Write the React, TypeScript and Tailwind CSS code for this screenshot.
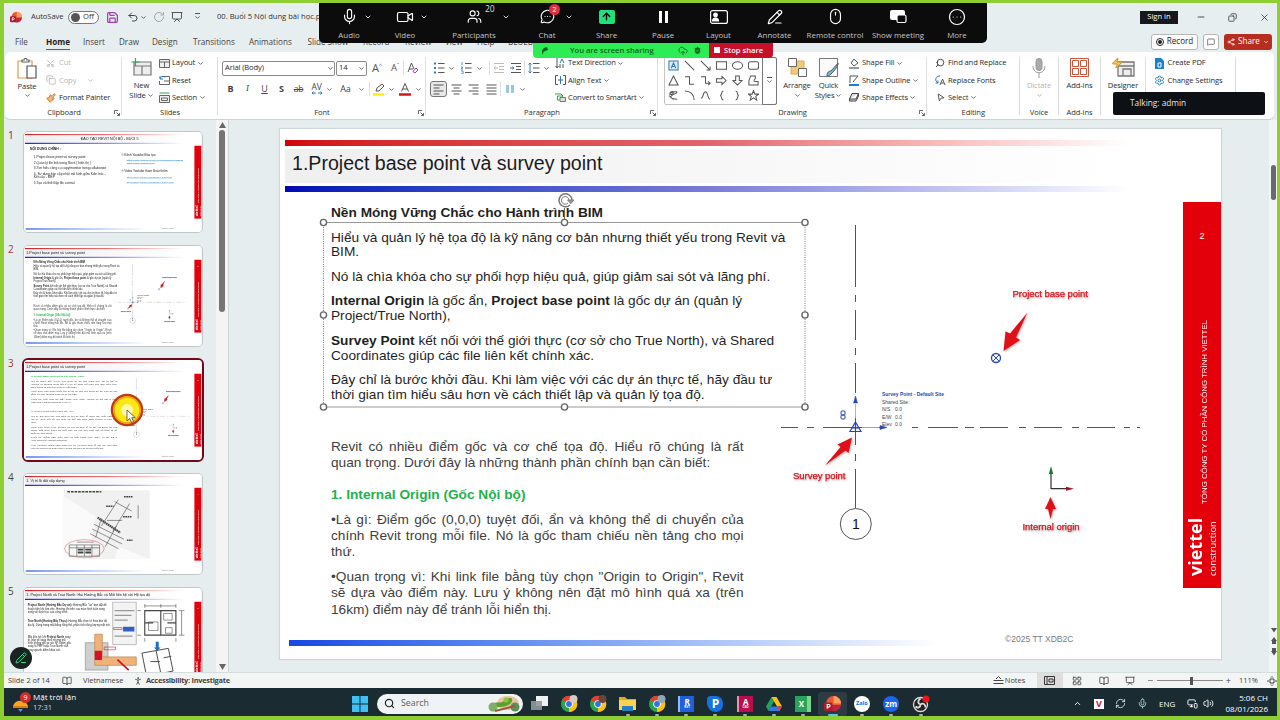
import type { ReactNode } from 'react';
import { Mic, Video, Users, MessageCircleMore, ArrowUp, PencilLine, Mouse, CircleEllipsis, ChevronDown, ChevronUp, Search, Undo2, RotateCw, Presentation, Save, Scissors, Copy, Paintbrush, MessageSquare, Share2, X, Minus, Copy as Restore, CloudUpload, ShieldCheck, BookOpen, RefreshCw, Volume2, MonitorSmartphone, Settings, LayoutGrid, MousePointer2, PersonStanding, Zap } from 'lucide-react';

const ui = "font-['Open_Sans','Noto_Sans',sans-serif]";

function Chev({ className = '' }: { className?: string }) {
  return <ChevronDown className={`shrink-0 size-[7px] text-[#444] ${className}`} strokeWidth={2.6} />;
}

function Group({ label, className, children, launcher }: { label: string; className: string; children: ReactNode; launcher?: boolean }) {
  return (
    <div className={`relative shrink-0 flex flex-col ${className}`}>
      <div className="h-[52px] flex items-start">{children}</div>
      <div className="h-[12px] flex items-center justify-center leading-none text-[#333]">{label}</div>
      {launcher && (
        <svg className="absolute right-[2px] bottom-[3px]" width="6" height="6" viewBox="0 0 6 6" fill="none" stroke="#444" strokeWidth=".8">
          <path d="M.5 4V.5H4M2.5 2.5l3 3M5.5 3v2.5H3" />
        </svg>
      )}
      <div className="absolute right-0 top-[2px] h-[58px] w-px bg-[#dcdcdc]" />
    </div>
  );
}

function Row({ icon, text, chev, dim }: { icon: ReactNode; text: string; chev?: boolean; dim?: boolean }) {
  return (
    <div className={`h-[17.3px] flex items-center leading-none ${dim ? 'text-[#b5b5b5]' : 'text-[#2a2a2a]'}`}>
      <span className="w-[13px] flex">{icon}</span>
      {text}
      {chev && <Chev className="ml-[1.5px]" />}
    </div>
  );
}

function Cell({ w, children, className = '' }: { w: string; children?: ReactNode; className?: string }) {
  return <span className={`shrink-0 flex items-center justify-center h-[16px] ${w} ${className}`}>{children}</span>;
}

function Lines4({ d }: { d: string }) {
  return (
    <svg width="11" height="11" viewBox="0 0 11 11" fill="none" stroke="#555" strokeWidth="1">
      <path d={d} />
    </svg>
  );
}

function ListIcon({ variant }: { variant: 'bullet' | 'number' | 'dec' | 'inc' | 'space' }) {
  return (
    <svg width="12" height="12" viewBox="0 0 12 12" fill="none" strokeWidth="1">
      {variant === 'bullet' && <path d="M1 1.5h2M1 6h2M1 10.5h2" stroke="#2b7cb8" strokeWidth="2" />}
      {variant === 'number' && <path d="M2 0v3M1 5h1.5v1L1 7h2M1 9h2v3H1" stroke="#2b7cb8" strokeWidth=".8" />}
      {variant === 'space' && <path d="M2 1v10M.5 2.5L2 1l1.500 1.500M.5 9.500L2 11l1.500-1.500" stroke="#2b7cb8" />}
      {(variant === 'dec' || variant === 'inc') ? (
        <>
          <path d="M1 1.500h10M6 4.500h5M6 7.500h5M1 10.500h10" stroke={variant === 'dec' ? '#bbb' : '#555'} />
          <path d={variant === 'dec' ? 'M5 6H1M2.500 4.500L1 6l1.500 1.500' : 'M0 6h4M2.500 4.500L4 6 2.500 7.500'} stroke={variant === 'dec' ? '#bbb' : '#2b7cb8'} />
        </>
      ) : (
        <path d="M5 1.500h6.500M5 6h6.500M5 10.500h6.500" stroke="#555" />
      )}
    </svg>
  );
}

const shapes = [
  'M1 1h10v10H1zM3.500 9L6 3l2.500 6M4.500 7h3', 'M1 1l10 10', 'M1 1l10 10M7 11h4V7', 'M.5 2h11v8H.5z', 'M.5 6a5.500 4 0 1 0 11 0a5.500 4 0 1 0-11 0', 'M2.500 2h7a2 2 0 0 1 2 2v4a2 2 0 0 1-2 2h-7a2 2 0 0 1-2-2V4a2 2 0 0 1 2-2z',
  'M6 1l5 10H1z', 'M1 2h5v8h5', 'M1 2h5v7h5M9 7l2 2-2 2', 'M.5 4h6V1.500L11 6l-4.500 4.500V8h-6z', 'M4 1h4v5h3l-5 5-5-5h3z', 'M3 1h5v3c-2 1-2 3 0 3h3v4H1V6z',
  'M2 3c5-4 5 2 1 2s3-4 6-3-5 3-6 5 4 3 7 3M1 7c1-2 3 3 5 3', 'M1 1c6 0 10 4 10 10', 'M1 9c3 0 2-7 5-7s2 8 5 8', 'M8 1c-3 0-1 5-3.500 5C7 6 5 11 8 11', 'M4 1c3 0 1 5 3.500 5C5 6 7 11 4 11', 'M6 .5l1.500 4H11.500L8.500 7l1 4L6 8.500 2.500 11l1-4L.5 4.500h4z',
];

function ZoomItem({ w, icon, label, chev, count }: { w: string; icon: ReactNode; label: string; chev?: string; count?: string }) {
  return (
    <div className={`relative shrink-0 flex flex-col items-center ${w}`}>
      <div className="h-[30px] pt-[3px] flex items-center text-white">{icon}</div>
      <span className="text-[7.900px] leading-[10px] text-[#c4c4c4]">{label}</span>
      {chev && <ChevronDown className={`absolute top-[13px] size-[8px] text-white ${chev}`} strokeWidth={2.500} />}
      {count && <span className="absolute left-[54px] top-[5px] text-[8.5px] leading-none text-[#ddd]">{count}</span>}
    </div>
  );
}

function TitleBar() {
  return (
    <div className="h-[28px] shrink-0 flex items-center text-[7.6px] leading-none text-[#333] whitespace-nowrap">
      <div className="flex items-center w-[316px] pl-[6px] overflow-hidden *:shrink-0">
        <PptLogo size={12} />
        <span className="ml-[9px] w-[37px] tracking-[-0.1px]">AutoSave</span>
        <span className="w-[31px] h-[13px] rounded-full border border-[#777] bg-white flex items-center gap-[3px] pl-[2px]">
          <i className="size-[9px] rounded-full bg-[#555]" />Off
        </span>
        <Save className="ml-[7px] size-[13px] text-[#a33fb5]" strokeWidth={2.300} />
        <Undo2 className="ml-[8px] size-[12px] text-[#444]" />
        <Chev className="ml-[1px]" />
        <RotateCw className="ml-[6px] size-[12px] text-[#a5a5a5]" />
        <Presentation className="ml-[6px] size-[12px] text-[#555]" />
        <span className="ml-[11px] flex flex-col items-center"><i className="w-[5px] h-px bg-[#555]" /><Chev /></span>
        <span className="ml-[16px]">00. Buổi 5 Nội dung bài học.pptx</span>
      </div>
      <div className="flex-1" />
      <span className="w-[38px] h-[13px] bg-[#16181c] text-white flex items-center justify-center">Sign in</span>
      <Minus className="ml-[18px] size-[10px]" />
      <Restore className="ml-[22px] size-[9px] -scale-x-100" />
      <X className="ml-[22px] mr-[7px] size-[11px]" strokeWidth={1.700} />
    </div>
  );
}

function PptLogo({ size }: { size: number }) {
  return (
    <svg width={size} height={size} viewBox="0 0 16 16">
      <circle cx="9" cy="8" r="7" fill="#e8593a" />
      <path d="M9 1a7 7 0 0 1 7 7H9z" fill="#f9a05c" />
      <path d="M2 9.500h14A7 7 0 0 1 4 13z" fill="#b9253c" />
      <rect x="0" y="7" width="8" height="8" rx="1.500" fill="#a81e2d" />
      <path d="M3 13V9h1.500a1.200 1.200 0 0 1 0 2.400H3" fill="none" stroke="#fff" />
    </svg>
  );
}

const tabs = [
  ['File', 'w-[31px]'], ['Home', 'w-[37px]'], ['Insert', 'w-[36px]'], ['Draw', 'w-[33px]'], ['Design', 'w-[41px]'], ['Transitions', 'w-[56px]'],
  ['Animations', 'w-[58.5px]'], ['Slide Show', 'w-[55.5px]'], ['Record', 'w-[42px]'], ['Review', 'w-[40px]'], ['View', 'w-[32px]'], ['Help', 'w-[31px]'], ['BLUEBEAM', 'w-[50px]'],
];

function TabRow() {
  return (
    <div className="h-[21px] shrink-0 flex items-center text-[8.1px] leading-none text-[#444] pl-[11px] pr-[5px] whitespace-nowrap">
      {tabs.map(([name, w]) => (
        <span key={name} className={`shrink-0 h-[17px] flex items-center ${w}`}>
          <span className={`h-full pt-[5px] border-b-[1.5px] ${name === 'Home' ? 'font-bold text-[#222] border-[#b7392a]' : 'border-transparent'}`}>{name}</span>
        </span>
      ))}
      <div className="flex-1" />
      <span className="h-[16px] w-[47px] rounded-[3px] border border-[#b5b5b5] bg-white flex items-center justify-center gap-[3px] text-[#222]">
        <i className="size-[8px] rounded-full border border-[#222] flex items-center justify-center"><i className="size-[4px] rounded-full bg-[#222]" /></i>Record
      </span>
      <span className="ml-[5px] h-[16px] w-[16px] rounded-[3px] border border-[#b5b5b5] bg-white flex items-center justify-center"><MessageSquare className="size-[8px]" /></span>
      <span className="ml-[5px] h-[16px] w-[48px] rounded-[3px] bg-[#b72d1f] text-white flex items-center justify-center gap-[3px]">
        <Share2 className="size-[8px]" />Share<ChevronDown className="size-[6px]" strokeWidth={3} />
      </span>
    </div>
  );
}

function Ribbon() {
  return (
    <div className="h-[67px] shrink-0 ml-[1px] mr-[3px] rounded-[5px] bg-white shadow-[0_1px_1px_#c9d0d2] pt-[2.5px] pl-[1px] flex text-[7.6px] tracking-[-0.12px] text-[#2a2a2a] whitespace-nowrap overflow-hidden">
      <Group label="Clipboard" className="w-[116px]" launcher>
        <div className="w-[40px] pl-[2px] pt-[3px] flex flex-col items-center leading-none">
          <svg width="20" height="21" viewBox="0 0 20 21" fill="#fff" strokeWidth="1.200">
            <path d="M1 3h14v17H1z" stroke="#e39a45" />
            <path d="M5 4V2h2a1.500 1.500 0 0 1 3 0h2v2z" stroke="#666" />
            <path d="M10 8h9v12h-9z" stroke="#555" />
          </svg>
          <span className="mt-[4px]">Paste</span>
          <Chev className="mt-[2px]" />
        </div>
        <div>
          <Row dim icon={<Scissors className="size-[9px] -rotate-90" />} text="Cut" />
          <div className="flex items-center"><Row dim icon={<Copy className="size-[10px]" />} text="Copy" /><Chev className="ml-[11px] opacity-40" /></div>
          <Row icon={<Paintbrush className="size-[10px] text-[#d5731e] fill-[#f0b878]" />} text="Format Painter" />
        </div>
      </Group>
      <Group label="Slides" className="w-[96px]">
        <div className="w-[37px] pl-[2px] pt-[3px] flex flex-col items-center leading-none">
          <svg width="21" height="18" viewBox="0 0 21 18" fill="none" stroke="#777" strokeWidth="1.200">
            <path d="M3 4h17v13H3zM3 8h17M11 8v9" fill="#eee" />
            <path d="M4.500 0v8M.5 4h8" stroke="#3aa655" />
          </svg>
          <span className="mt-[6px]">New</span>
          <span className="mt-[3px] flex items-center">Slide<Chev className="ml-[1px]" /></span>
        </div>
        <div>
          <Row chev icon={<svg width="11" height="9" viewBox="0 0 11 9" fill="#eee" stroke="#666"><path d="M.5.5h10v8H.5zM.5 3h10M5.500 3v5.500" /></svg>} text="Layout" />
          <Row icon={<svg width="11" height="10" viewBox="0 0 11 10" fill="none" stroke="#666"><path d="M3 1.500h7.500v8H.5V6M5 6h5" /><path d="M1 1v3h3M1 4c1-3 3-3 5-2" stroke="#2b7cb8" /></svg>} text="Reset" />
          <Row chev icon={<svg width="11" height="11" viewBox="0 0 11 11" fill="#eee" stroke="#666"><path d="M.5 1h10" stroke="#3aa655" /><path d="M.5 3.500h10v7H.5zM2.500 6h6v2.500h-6z" /></svg>} text="Section" />
        </div>
      </Group>
      <Group label="Font" className="w-[208px]" launcher>
        <div className="pl-[4px]">
          <div className="h-[16px] mt-[5.500px] flex items-center">
            <span className="w-[113px] h-[15px] border border-[#8a8a8a] rounded-[2px] flex items-center justify-between px-[2px]">Arial (Body)<Chev className="-mr-[2px]" /></span>
            <span className="ml-px w-[31px] h-[15px] border border-[#8a8a8a] rounded-[2px] flex items-center justify-between px-[2px]">14<Chev className="-mr-[1px]" /></span>
            <Cell w="w-[20px]" className="text-[11px] text-[#555]">A<sup className="text-[6px] text-[#2b7cb8]">^</sup></Cell>
            <Cell w="w-[16px]" className="text-[9.5px] text-[#555]">A<sup className="text-[6px] text-[#2b7cb8]">ˇ</sup></Cell>
            <i className="h-[14px] w-px bg-[#ddd]" />
            <Cell w="w-[18px]"><svg width="12" height="12" viewBox="0 0 12 12" fill="none" stroke="#555"><path d="M1 10L4.500 1 7 7M2 7h4" /><path d="M6 9.500L9 6l2 2-3 3z" stroke="#a33fb5" /></svg></Cell>
          </div>
          <div className="h-[16px] mt-[5px] flex items-center text-[9px] text-[#444]">
            <Cell w="w-[17px]" className="font-bold">B</Cell>
            <Cell w="w-[17px]" className="italic font-serif">I</Cell>
            <Cell w="w-[17px]" className="underline">U</Cell>
            <Cell w="w-[17px]" className="font-bold">S</Cell>
            <Cell w="w-[17px]" className="line-through text-[8.500px]">ab</Cell>
            <Cell w="w-[19px]" className="text-[8.5px] leading-[8px] flex-col">AV<svg width="12" height="4" viewBox="0 0 12 4" fill="none" stroke="#2b7cb8"><path d="M1 2h4M7 2h4M2.500 .5L1 2l1.500 1.500M9.500.5L11 2 9.500 3.500" /></svg></Cell>
            <Cell w="w-[7px]"><Chev /></Cell>
            <Cell w="w-[25px]">Aa</Cell>
            <Chev />
            <i className="ml-[4px] h-[14px] w-px bg-[#ddd]" />
            <Cell w="w-[18px]"><svg width="12" height="13" viewBox="0 0 12 13" fill="none"><path d="M3 8l1-3 5-4 2 2-5 5z" stroke="#555" /><path d="M0 11.500h11" stroke="#fdf100" strokeWidth="2.500" /></svg></Cell>
            <Chev />
            <Cell w="w-[20px]"><svg width="12" height="13" viewBox="0 0 12 13" fill="none"><path d="M2.500 8.500L6 .5l3.500 8M4 6h4" stroke="#555" /><path d="M0 11.500h12" stroke="#d01818" strokeWidth="2.500" /></svg></Cell>
            <Chev />
          </div>
        </div>
      </Group>
      <Group label="Paragraph" className="w-[232px]" launcher>
        <div className="w-[129px] pl-[4px]">
          <div className="h-[16px] mt-[5.5px] flex items-center">
            <Cell w="w-[17px]"><ListIcon variant="bullet" /></Cell><Chev className="ml-px" />
            <Cell w="w-[21px]"><ListIcon variant="number" /></Cell><Chev />
            <i className="ml-[6px] h-[14px] w-px bg-[#ddd]" />
            <Cell w="w-[17px]"><ListIcon variant="dec" /></Cell>
            <Cell w="w-[17px]"><ListIcon variant="inc" /></Cell>
            <i className="h-[14px] w-px bg-[#ddd]" />
            <Cell w="w-[18px]"><ListIcon variant="space" /></Cell><Chev />
          </div>
          <div className="h-[16px] mt-[5px] flex items-center">
            <Cell w="w-[17px]" className="border border-[#777] bg-[#e8e8e8] rounded-[3px]"><Lines4 d="M.5 1h10M.5 4h6M.5 7h10M.5 10h6" /></Cell>
            <Cell w="w-[18px]"><Lines4 d="M.5 1h10M2.5 4h6M.5 7h10M2.5 10h6" /></Cell>
            <Cell w="w-[17px]"><Lines4 d="M.5 1h10M4.5 4h6M.5 7h10M4.5 10h6" /></Cell>
            <Cell w="w-[18px]"><Lines4 d="M.5 1h10M.5 4h10M.5 7h10M.5 10h10" /></Cell>
            <i className="h-[14px] w-px bg-[#ddd]" />
            <Cell w="w-[18px]"><svg width="10" height="8" viewBox="0 0 10 8" fill="#9cc7df"><path d="M1 0h3v8H1zM6 0h3v8H6z" /></svg></Cell>
            <Chev />
          </div>
        </div>
        <div>
          <Row chev icon={<svg width="10" height="11" viewBox="0 0 10 11" fill="none" stroke="#555"><path d="M2 0v10M.5 8L2 10l1.500-2M5 6v4M8 6v4" /><path d="M5 5l2-4 2 4" stroke="#2b7cb8" /></svg>} text="Text Direction" />
          <Row chev icon={<svg width="11" height="10" viewBox="0 0 11 10" fill="none" stroke="#555"><path d="M3 .5H.5v9H3M8 .5h2.500v9H8M3 5h5" /><path d="M5.500 1v8" stroke="#2b7cb8" /></svg>} text="Align Text" />
          <Row chev icon={<svg width="11" height="9" viewBox="0 0 11 9" fill="none" stroke="#777"><path d="M0 1h6l2 2" stroke="#3aa655" /><path d="M2.500 3h5v4h-5z" stroke="#3aa655" /><path d="M5 4.500h5.500v4H5z" fill="#ddd" /></svg>} text="Convert to SmartArt" />
        </div>
      </Group>
      <Group label="Drawing" className="w-[269px]" launcher>
        <div className="ml-[6px] mt-[2px] w-[113px] h-[48px] border border-[#c4c4c4] rounded-[2px] flex">
          <div className="w-[97px] grid grid-cols-6 grid-rows-3 place-items-center">
            {shapes.map((d, i) => (
              <svg key={i} width="11" height="11" viewBox="0 0 12 12" fill={i === 0 ? '#dcebf5' : 'none'} stroke={i === 0 ? '#2b7cb8' : '#555'} strokeWidth="1.100"><path d={d} /></svg>
            ))}
          </div>
          <div className="flex-1 -my-px -mr-px border border-[#777] rounded-r-[2px] flex flex-col items-center justify-center"><i className="w-[5px] h-px bg-[#555]" /><Chev /></div>
        </div>
        <div className="w-[38px] pl-[2px] pt-[3px] flex flex-col items-center leading-none">
          <svg width="19" height="19" viewBox="0 0 19 19" strokeWidth="1"><path d="M3 3h13v13H3z" fill="#f2c879" stroke="#e0a84c" /><path d="M.5.5h8v8h-8zM10.500 10.500h8v8h-8z" fill="#fff" stroke="#666" /></svg>
          <span className="mt-[5px]">Arrange</span>
          <Chev className="mt-[3px]" />
        </div>
        <div className="w-[27px] pt-[3px] flex flex-col items-center leading-none">
          <svg width="20" height="20" viewBox="0 0 20 20" fill="#fafafa" stroke="#777"><path d="M.5.5h18v18H.5z" /><path d="M8 18c0-4 2-5 4-5l7-8c1 2-4 8-6 10s-3 3-5 3z" fill="#7ab8dc" stroke="#555" /></svg>
          <span className="mt-[4px]">Quick</span>
          <span className="mt-[3px] flex items-center">Styles<Chev className="ml-[1px]" /></span>
        </div>
        <div className="ml-[7px]">
          <Row chev icon={<svg width="10" height="11" viewBox="0 0 10 11" fill="none" stroke="#555"><path d="M2 5l3-4 4 4-4 3z" /><path d="M0 10h10" stroke="#999" strokeWidth="2" /></svg>} text="Shape Fill" />
          <Row chev icon={<svg width="10" height="11" viewBox="0 0 10 11" fill="none" stroke="#555"><path d="M9 1H1v7M4 7l5-6" /><path d="M0 10h10" stroke="#1986c9" strokeWidth="2" /></svg>} text="Shape Outline" />
          <Row chev icon={<svg width="10" height="9" viewBox="0 0 10 9" fill="#ddd" stroke="#444"><path d="M3 .5h6.500L7 6H.5zM.5 6v2H7l2.500-5V.5" /></svg>} text="Shape Effects" />
        </div>
      </Group>
      <Group label="Editing" className="w-[92.5px]">
        <div className="ml-[8px]">
          <Row icon={<Search className="size-[10px] -scale-x-100" />} text="Find and Replace" />
          <Row icon={<svg width="11" height="11" viewBox="0 0 11 11" fill="none" stroke="#555"><path d="M5 10l2.500-6L10 10M6 8h3" /><path d="M5 1C2 1 0 3 1 6l2 2M3 5.500V8H.5" stroke="#2b7cb8" /></svg>} text="Replace Fonts" />
          <Row chev icon={<MousePointer2 className="ml-px size-[9px] rotate-12" />} text="Select" />
        </div>
      </Group>
      <Group label="Voice" className="w-[39px]">
        <div className="w-full pt-[3px] flex flex-col items-center leading-none text-[#b5b5b5]">
          <svg width="14" height="20" viewBox="0 0 14 20" fill="none" stroke="#999"><rect x="4" y=".5" width="6" height="12" rx="3" fill="#aaa" /><path d="M1 8c0 9 12 9 12 0M7 15v5" /></svg>
          <span className="mt-[4px]">Dictate</span>
          <Chev className="mt-[3px] opacity-50" />
        </div>
      </Group>
      <Group label="Add-ins" className="w-[42px]">
        <div className="w-full pt-[3px] flex flex-col items-center leading-none">
          <svg width="19" height="19" viewBox="0 0 19 19" fill="none" stroke="#c8553d"><path d="M.5.500h18v18h-18zM2.500 2.500h6v6h-6zM10.500 2.500h6v6h-6zM2.500 10.500h6v6h-6zM10.500 10.500h6v6h-6z" /></svg>
          <span className="mt-[5px]">Add-ins</span>
        </div>
      </Group>
      <Group label="" className="w-[45px]">
        <div className="w-full pt-[2px] flex flex-col items-center leading-none">
          <div className="flex h-[20px] items-end">
            <Zap className="size-[12px] -mr-[6px] mb-[8px] text-[#d98a1e] fill-[#f7c55a] z-10" />
            <svg width="18" height="16" viewBox="0 0 18 16" fill="#eee" stroke="#777" strokeWidth="1.300"><path d="M1 1h16v14H1zM1 5h16M6 8h8v7H6z" /></svg>
          </div>
          <span className="mt-[5px]">Designer</span>
        </div>
      </Group>
      <Group label="" className="w-[90px]">
        <div className="ml-[9px]">
          <Row icon={<svg width="9" height="11" viewBox="0 0 9 11"><path d="M0 0h6l3 3v8H0z" fill="#1a80c9" /><path d="M3 5h3v4H3z" fill="none" stroke="#fff" /></svg>} text="Create PDF" />
          <Row icon={<Settings className="-ml-px size-[11px] text-[#1a80c9]" />} text="Change Settings" />
        </div>
      </Group>
    </div>
  );
}

function SlideFrame({ title, center, children, page }: { title: string; center?: boolean; children?: ReactNode; page?: number }) {
  return (
    <div className="relative w-[941px] h-[530px] bg-white font-['Liberation_Sans',Arial,sans-serif] overflow-hidden">
      <div className="pt-[11px] pl-[5px] w-[850px]">
        <div className="h-[6px] bg-linear-to-r from-[#d2000f] via-[#e2646c] via-50% to-white" />
        <div className={`mt-[3px] h-[34px] bg-linear-to-r from-[#efefef] to-white text-[19.6px] leading-[29px] text-[#1c1c1c] whitespace-nowrap ${center ? 'text-center pl-[52px]' : 'pl-[7px]'}`}>{title}</div>
        <div className="mt-[2.5px] h-[6px] bg-linear-to-r from-[#0404b4] via-[#7a7ad8] via-50% to-white" />
      </div>
      {children}
      <div className="absolute left-[9px] top-[511px] w-[650px] h-[6px] bg-linear-to-r from-[#1746e2] to-white" />
      <span className="absolute left-[725px] top-[505px] text-[8.6px] tracking-[-0.05px] leading-[11px] text-[#7d7d7d]">©2025 TT XDB2C</span>
      <div className="absolute left-[903px] top-[72.5px] w-[38px] h-[386px] bg-[#e3000b] text-white flex flex-col items-center">
        <span className="mt-[29px] text-[9px] leading-[10px] h-[10px]">{page}</span>
        <div className="mt-[76px] h-[187px] flex items-end justify-center pl-[6px]">
          <span className="[writing-mode:vertical-rl] rotate-180 text-[7.85px] leading-[10px] whitespace-nowrap">TỔNG CÔNG TY CỔ PHẦN CÔNG TRÌNH VIETTEL</span>
        </div>
        <div className="mt-[12px] flex gap-[2px] items-end whitespace-nowrap">
          <span className="[writing-mode:vertical-rl] rotate-180 text-[18px] leading-[20px] font-bold font-['Open_Sans',sans-serif] h-[60px]">viettel</span>
          <span className="[writing-mode:vertical-rl] rotate-180 text-[9.4px] leading-[12px] font-['Open_Sans',sans-serif] h-[60px]">construction</span>
        </div>
      </div>
    </div>
  );
}

function Justified({ lines }: { lines: string[] }) {
  return (
    <>
      {lines.map((l, i) => (
        <div key={i} className={i < lines.length - 1 ? '[text-align-last:justify]' : ''}>{l}</div>
      ))}
    </>
  );
}

function Diagram({ x = 'left-0' }: { x?: string }) {
  return (
    <svg className={`absolute top-0 ${x}`} width="900" height="530" viewBox="280 129 900 530" fontFamily="Liberation Sans, Arial, sans-serif">
      <g stroke="#555" strokeWidth="1" fill="none">
        <path d="M855.500 225v62M855.500 295v7M855.500 310v30M855.500 348v7M855.500 363v30M855.500 405v40M855.500 454v7M855.500 469v39" />
        <path d="M781 427.500h17M807 427.500h7M823 427.500h60M912 427.500h6M928 427.500h30M965 427.500h9M980 427.500h28M1019 427.500h7M1034 427.500h28M1072 427.500h7M1087 427.500h28M1124 427.500h6M1137 427.500h3" />
        <circle cx="855.800" cy="524" r="15.500" fill="#fff" />
      </g>
      <text x="855.800" y="529" fontSize="14" textAnchor="middle" fill="#111">1</text>
      <g stroke="#2547b0" fill="none">
        <path d="M855.500 422l5.500 9.500h-11zM855.500 423v9M852 428h7" strokeWidth="1.200" />
        <path d="M855.500 396l-2 7h4z" fill="#2547b0" strokeWidth=".5" />
        <path d="M880 425.500v4l7-2z" fill="#2547b0" strokeWidth=".5" />
        <rect x="841" y="411" width="4" height="4" rx="1" /><rect x="841" y="415" width="4" height="4" rx="1" />
        <circle cx="996" cy="358" r="4.500" strokeWidth="1.300" />
        <path d="M993 355l6 6M999 355l-6 6" />
      </g>
      <path d="M855.500 404v14" stroke="#8fd08f" /><path d="M862 427.500h17" stroke="#e08b9b" />
      <g fontSize="5" fill="#444">
        <text x="882" y="396" fill="#2547b0" fontWeight="bold" fontSize="4.900" textLength="62">Survey Point - Default Site</text>
        <text x="882" y="403.500">Shared Site:</text>
        <text x="882" y="411">N/S</text><text x="895" y="411">0.0</text>
        <text x="882" y="418.500">E/W</text><text x="895" y="418.500">0.0</text>
        <text x="882" y="426">Elev</text><text x="895" y="426">0.0</text>
      </g>
      <g fill="#e01018" className="drop-shadow-[1px_1px_1px_#00000055]">
        <path d="M1027.500 312.500l-17.500 21-4.500-2-2 19.500 16.500-11-4-2.500z" />
        <path d="M825 465.500l15.500-18.500-3-2.500 14.500-7-3.500 15.500-3-2.500z" />
        <path d="M1050.500 497l-5.500 12h3l2.500 10 2.500-10h3z" />
        <g fontSize="9.500" stroke="#e01018" strokeWidth=".25">
          <text x="1012.500" y="297" textLength="75.500">Project base point</text>
          <text x="793" y="479" textLength="52.500">Survey point</text>
          <text x="1022.500" y="529.500" textLength="57">Internal origin</text>
        </g>
      </g>
      <path d="M1051 489v-16M1051 488.700h18" stroke="#333" fill="none" strokeWidth="1.200" />
      <path d="M1051 466l-2.200 8h4.400z" fill="#1f7a2f" /><path d="M1074 488.700l-8-2v4z" fill="#a3122b" />
    </svg>
  );
}

function MainSlide() {
  return (
    <SlideFrame title="1.Project base point và survey point" page={2}>
      <div className="absolute left-[51px] top-[75px] w-[480px] text-[13.68px] leading-[14.75px] text-[#1f1f1f] whitespace-nowrap">
        <div className="font-bold leading-[17px]">Nền Móng Vững Chắc cho Hành trình BIM</div>
        <div className="mt-[9.5px] flex flex-col gap-[9.85px]">
          <p>Hiểu và quản lý hệ tọa độ là kỹ năng cơ bản nhưng thiết yếu trong Revit và<br />BIM.</p>
          <p>Nó là chìa khóa cho sự phối hợp hiệu quả, giúp giảm sai sót và lãng phí.</p>
          <p><b>Internal Origin</b> là gốc ẩn, <b>Project base point</b> là gốc dự án (quản lý<br />Project/True North),</p>
          <p><b>Survey Point</b> kết nối với thế giới thực (cơ sở cho True North), và Shared<br />Coordinates giúp các file liên kết chính xác.</p>
          <p>Đây chỉ là bước khởi đầu. Khi làm việc với các dự án thực tế, hãy đầu tư<br />thời gian tìm hiểu sâu hơn về cách thiết lập và quản lý tọa độ.</p>
        </div>
      </div>
      <div className="absolute left-[51px] top-[309.5px] w-[412.5px] text-[13.68px] leading-[16.4px] text-[#404040] whitespace-nowrap">
        <Justified lines={['Revit có nhiều điểm gốc và cơ chế tọa độ. Hiểu rõ chúng là rất', 'quan trọng. Dưới đây là những thành phần chính bạn cần biết:']} />
        <div className="mt-[15.5px] font-bold text-[#22b14c]">1. Internal Origin (Gốc Nội bộ)</div>
        <div className="mt-[8.3px]"><Justified lines={['•Là gì: Điểm gốc (0,0,0) tuyệt đối, ẩn và không thể di chuyển của', 'chính Revit trong mỗi file. Nó là gốc tham chiếu nền tảng cho mọi', 'thứ.']} /></div>
        <div className="mt-[8.3px]"><Justified lines={['•Quan trọng vì: Khi link file bằng tùy chọn "Origin to Origin", Revit', 'sẽ dựa vào điểm này. Lưu ý không nên đặt mô hình quá xa (trên', '16km) điểm này để tránh lỗi hiển thị.']} /></div>
      </div>
      <Diagram />
    </SlideFrame>
  );
}

const handles = [[323.500, 222.500], [564.500, 222.500], [805, 222.500], [323.500, 315], [805, 315], [323.500, 407], [564.500, 407], [805, 407]];

function Selection() {
  return (
    <svg className="absolute left-0 top-0" width="600" height="530" viewBox="280 129 600 530" fill="none" stroke="#666">
      <path d="M323.500 222.500H805M323.500 407H805" stroke="#999" />
      <path d="M323.500 222.500V407M805 222.500V407" stroke="#777" strokeDasharray="1 1.300" />
      <path d="M564.500 208v11" />
      {handles.map(([x, y]) => <circle key={`${x}-${y}`} cx={x} cy={y} r="3.100" fill="#fff" strokeWidth="1.400" />)}
      <path d="M572 200a6.500 6.500 0 1 0-2 5" stroke="#777" strokeWidth="1.500" />
      <path d="M569 200a3.800 3.800 0 1 0-1 3" stroke="#777" strokeWidth="1" />
      <path d="M567.500 200h6.500l-3.200 3.800z" fill="#999" stroke="#777" strokeWidth=".8" />
    </svg>
  );
}

function Thumb({ n, selected, children }: { n: number; selected?: boolean; children: ReactNode }) {
  return (
    <div className="flex h-[114px] shrink-0">
      <span className={`w-[20px] pl-[4px] text-[10px] leading-none ${n === 2 || selected ? 'text-[#a0402f]' : 'text-[#444]'}`}>{n}</span>
      <div className={`w-[177.5px] h-[100px] mt-[1.5px] rounded-[4px] overflow-hidden ${selected ? 'outline-[2.500px] outline-[#6d0a1c] outline-offset-0' : 'outline outline-[#bfc7c9]'}`}>
        <div className="w-[941px] h-[530px] origin-top-left scale-[0.1887]">{children}</div>
      </div>
    </div>
  );
}

function FloorPlan() {
  return (
    <svg className="absolute left-[250px] top-[70px]" width="640" height="460" viewBox="0 0 640 460" fill="none" stroke="#444" strokeWidth="4">
      <path d="M220 5h125v225H220z" fill="#f3f3f3" stroke="#aaa" /><path d="M230 50h105M230 75h90M230 100h70M230 185h95" stroke="#999" strokeWidth="6" /><path d="M275 135h60v26h-60z" fill="#2f62c0" stroke="none" /><path d="M225 140h45v10h-45z" stroke="#d3122a" strokeWidth="3" />
      <path d="M390 50h165v130H390zM475 50v130M390 115h45M510 115h45" strokeWidth="6" /><path d="M410 110h50v45h-50zM500 140h35v30h-35zM490 65h45v35h-45z" strokeWidth="3" />
      <path d="M390 15v20M475 15v20M555 15v20M350 50h20M350 180h20M570 50h30M570 180h30M390 195v20M555 195v20M390 25h165M585 50v130" strokeWidth="3" />
      <path d="M448 215h16v30h10l-18 18-18-18h10z" fill="#1f6fc0" stroke="none" />
      <path d="M375 275l140-25 25 120-140 30zM450 262l25 120M420 320h50M490 300l40-8" strokeWidth="5" />
      <path d="M75 220h120v145H75z" fill="#cfcfcf" stroke="#999" /><path d="M125 175h40v120h180v45H125z" fill="#efb37a" stroke="#c08a55" /><path d="M125 262h38v50h-38z" fill="#d3122a" stroke="none" />
      <path d="M175 243h60v14h-60z" stroke="#d3122a" strokeWidth="3" /><path d="M245 310l60 55" stroke="#d3122a" strokeWidth="9" />
    </svg>
  );
}

function SitePlan() {
  return (
    <div className="absolute left-[210px] top-[86px] w-[456px] h-[365px] bg-[#f1f1f1]">
      <svg width="456" height="365" viewBox="0 0 456 365" fill="none" stroke="#444" strokeWidth="3">
        <path d="M0 30l170 110-40 225H0zM290 300l-20 65h186" fill="#fafafa" stroke="none" />
        <path d="M20 8h180" strokeWidth="7" strokeDasharray="14 5" />
        <path d="M290 50l-90 140M350 70l-90 150M270 60l90 50M230 160h80M395 80v70" />
        <path d="M180 145l120 80" strokeWidth="12" strokeDasharray="8 3" />
        <path d="M160 180l160 80M150 205l160 80M140 230l150 80M200 150l-30 100M280 190l-60 110" />
        <path d="M320 35h45M225 85h40M315 140h45M335 265h30" strokeWidth="8" strokeDasharray="9 3" />
        <path d="M30 290h160v60H30zM30 305h160M70 290v60M110 290v60M150 290v60M70 275h90" /><path d="M75 315h30M115 315h30M75 330h30M115 330h30" strokeWidth="10" />
        <ellipse cx="110" cy="310" rx="105" ry="48" stroke="#d96a6a" />
      </svg>
    </div>
  );
}

function Thumbnails() {
  return (
    <div className="w-[212px] shrink-0 pt-[10px] overflow-hidden whitespace-nowrap">
      <Thumb n={1}>
        <SlideFrame title="ĐÀO TẠO REVIT NỘI BỘ - BUỔI 5" center>
          <div className="absolute left-[32px] top-[76px] text-[18px] leading-[24px] text-[#222]">
            <b>NỘI DUNG CHÍNH :</b>
            <div className="pl-[20px] pt-[20px] text-[17.3px] leading-[29px]">1.Project base point và survey point<br />2.Quản lý file link trong Revit ( hiển thị )<br />3.Tìm hiểu công cụ copy/monitor trong collaborate<br />
              <span className="block leading-[19px] py-[4px]">4. Sử dụng bản cập nhật mô hình giữa Kiến trúc -<br />Kết cấu - MEP</span>5.Tạo và thiết lập file central</div>
          </div>
          <div className="absolute left-[512px] top-[108px] text-[16.5px] leading-[22px] text-[#222]">
            ① Kênh Youtube Đào tạo
            <div className="pl-[32px] pt-[10px] leading-[16px] text-[13px] text-[#1b7fc4] underline">https://www.youtube.com/@revit-training/playlists/all<br />https://www.youtube.com/</div>
            <div className="mt-[22px]">② Video Youtube tham khảo thêm</div>
            <div className="pl-[32px] pt-[10px] leading-[28px] text-[12px] text-[#1b7fc4] underline">https://www.youtube.com/watch?v=basepoint<br />https://www.youtube.com/watch?v=surveypoint</div>
          </div>
        </SlideFrame>
      </Thumb>
      <Thumb n={2}><MainSlide /></Thumb>
      <Thumb n={3} selected>
        <SlideFrame title="1.Project base point và survey point" page={3}>
          <div className="absolute left-[38px] top-[80px] w-[456px] text-[13px] leading-[16px] text-[#404040]">
            <b className="text-[#22b14c]">2. Project Base Point (Điểm Gốc Dự án - PBP)</b>
            <div className="mt-[8px]"><Justified lines={['•Là gì: Điểm gốc (0,0,0) của riêng dự án bạn đang làm. Nó có thể di', 'chuyển và thường được đặt ở vị trí dễ nhận biết như góc giao điểm trục.', 'Biểu tượng là hình tròn xanh có dấu nhân.']} /></div>
            <div className="mt-[8px]"><Justified lines={['•Mục đích: Làm tham chiếu tọa độ để đo đạc bên trong dự án. Cao độ các', 'tầng (Levels) thường được đo so với PBP.']} /></div>
            <div className="mt-[8px]"><Justified lines={['•Hiển thị: Mặc định chỉ thấy trong view "Site", nhưng có thể bật ở view', 'khác qua Visibility/Graphics (VG/VV).']} /></div>
            <b className="block mt-[34px] text-[#22b14c]">3. Survey Point (Điểm Khảo sát - SP)</b>
            <div className="mt-[8px]"><Justified lines={['•Là gì: Đại diện cho một điểm có tọa độ thực tế ngoài đời (mốc khảo sát', 'địa lý). Giúp kết nối mô hình với thế giới thực. Biểu tượng là hình tam', 'giác.']} /></div>
            <div className="mt-[8px]"><Justified lines={['•Mục đích: Định vị dự án theo hệ tọa độ thực tế (ví dụ: VN-2000) tại Việt', 'Nam). Rất quan trọng khi phối hợp với các bên khảo sát, hạ tầng và để', 'thiết lập True North.']} /></div>
            <div className="mt-[8px]"><Justified lines={['•Hiển thị: Giống PBP, mặc định chỉ thấy trong view "Site", có thể bật ở', 'view khác qua Visibility/Graphics.']} /></div>
            <div className="mt-[8px]"><Justified lines={['•Với VN-2000: Bằng cách nhập tọa độ VN-2000 thực tế vào SP, bạn đảm', 'bảo mô hình Revit được định vị chính xác theo hệ tọa độ quốc gia.']} /></div>
          </div>
          <Diagram x="left-[20px]" />
        </SlideFrame>
      </Thumb>
      <Thumb n={4}><SlideFrame title="1. Vị trí lô đất xây dựng" page={4}><SitePlan /></SlideFrame></Thumb>
      <Thumb n={5}>
        <SlideFrame title="1. Project North và True North: Hai Hướng Bắc và Mối liên hệ với Hệ tọa độ" page={5}>
          <div className="absolute left-[20px] top-[84px] w-[440px] text-[14.5px] leading-[17px] text-[#222] whitespace-normal">
            <p><b>Project North (Hướng Bắc Dự án):</b> Hướng Bắc "ảo" bạn đặt để thuận tiện khi làm việc. Hướng lên trên của màn hình luôn song song với lưới trục của công trình.</p>
            <p className="mt-[34px]"><b>True North (Hướng Bắc Thực):</b> Hướng Bắc thực tế theo bản đồ địa lý. Dùng trong mặt bằng tổng thể, phân tích năng lượng mặt trời.</p>
            <p className="mt-[48px] w-[230px]">Mối liên hệ: khi <b>Project North</b> xoay đi, bản vẽ xoay theo nhưng mô hình không đổi so với SP. Điểm gốc xoay là PBP hoặc True North cần xoay quanh điểm khảo sát.</p>
          </div>
          <FloorPlan />
        </SlideFrame>
      </Thumb>
    </div>
  );
}

function Chrome({ badge }: { badge: string }) {
  return (
    <svg width="18" height="18" viewBox="0 0 18 18">
      <circle cx="9" cy="9" r="8" fill="#2ba24c" />
      <path d="M9 9L2 5a8 8 0 0 1 14.500 1z" fill="#e53e30" /><path d="M9 9l7.500-3.500A8 8 0 0 1 9 17z" fill="#fbc116" />
      <circle cx="9" cy="9" r="3.800" fill="#fff" /><circle cx="9" cy="9" r="2.900" fill="#2f73e0" />
      <circle cx="13.500" cy="4" r="4" fill={badge} />
    </svg>
  );
}

function Tile({ className, children }: { className: string; children: ReactNode }) {
  return <span className={`size-[16px] flex items-center justify-center text-white font-bold leading-none ${className}`}>{children}</span>;
}

const taskIcons: ReactNode[] = [
  <svg width="17" height="15" viewBox="0 0 17 15"><path d="M5 0h12v10H5z" fill="#f1f1f1" /><path d="M0 5h11v9H0z" fill="#8f999c" opacity=".9" /></svg>,
  <Chrome badge="#d9c9c0" />,
  <Chrome badge="#6b4636" />,
  <svg width="17" height="15" viewBox="0 0 17 15"><path d="M0 1h6l2 2h9v11H0z" fill="#e8a90c" /><path d="M0 4h17v10H0z" fill="#fcd354" /><path d="M3 10h11v5H3z" fill="#2a80bd" /></svg>,
  <Chrome badge="#8fa9b4" />,
  <Tile className="bg-[#2060d8] border-l-2 border-[#9bb8ee] text-[8px] flex-col">R<small className="text-[3px]">RVT</small></Tile>,
  <Tile className="bg-[#1672e0] rounded-[4px_8px_8px_10px] text-[12px]">P</Tile>,
  <Tile className="bg-[#b80f4c] border-l-2 border-[#e891ae] text-[8px] flex-col">A<small className="text-[3px]">CAD</small></Tile>,
  <svg width="16" height="14" viewBox="0 0 16 14"><path d="M5.500 0L0 9.500 2.500 14 8 4.500z" fill="#1da462" /><path d="M5.500 0h5L16 9.500h-5z" fill="#fbc116" /><path d="M5 9.500h11L13.500 14h-11z" fill="#3777e3" /><path d="M13.500 14L16 9.500h-5z" fill="#e53e30" /></svg>,
  <Tile className="bg-[#2aa35a] border-r-4 border-[#7fd38a] text-[8px]">X</Tile>,
  <PptLogo size={17} />,
  <Tile className="rounded-full bg-white text-[#0b68ff]! text-[5.5px]">Zalo</Tile>,
  <Tile className="rounded-full bg-[#1b64f0] text-[8px]">zm</Tile>,
  <svg width="18" height="18" viewBox="0 0 18 18" fill="none" stroke="#ddd"><circle cx="8.500" cy="9.500" r="7" fill="#222" strokeWidth="1.300" /><path d="M8.500 9.500c-3-1-3-4 0-6M8.500 9.500c3-2 5 0 5 3M8.500 9.500c0 3-3 4-5 2" strokeWidth="1.800" /><circle cx="14" cy="4" r="3.500" fill="#f01313" stroke="none" /></svg>,
];

function Taskbar() {
  return (
    <div className="h-[28px] shrink-0 bg-[#1a2b31] flex items-center text-white text-[8px] leading-none whitespace-nowrap pt-[3px]">
      <div className="w-[344px] flex items-center pl-[8px]">
        <div className="relative w-[20px] h-[18px]">
          <svg width="18" height="18" viewBox="0 0 18 18"><path d="M1 11a8 8 0 0 1 15 0v2H1z" fill="#f5a623" /><path d="M1 11h15v2H1z" fill="#e27a12" /><path d="M6 14l2.500 3 2.500-3z" fill="#3fa4e8" /></svg>
          <span className="absolute left-[8px] -top-[3px] size-[11px] rounded-full bg-[#d02a2a] flex items-center justify-center text-[7px]">9</span>
        </div>
        <div className="ml-[1px] flex flex-col gap-[3px] -mt-[3px]"><span>Mặt trời lặn</span><span className="text-[#cfd6d8] text-[7.5px]">17:31</span></div>
      </div>
      <svg className="ml-[4px]" width="16" height="16" viewBox="0 0 16 16" fill="#3fc0f5"><path d="M0 0h7.500v7.500H0zM8.500 0H16v7.500H8.500zM0 8.500h7.500V16H0zM8.500 8.500H16V16H8.500z" /></svg>
      <div className="ml-[9px] w-[146px] h-[20px] rounded-full bg-[#f0f3f5] flex items-center pl-[7px] pr-[3px] text-[#5a5f63]">
        <Search className="size-[11px] text-[#222]" strokeWidth={2.500} />
        <span className="ml-[6px] text-[8.800px] flex-1">Search</span>
        <svg width="32" height="17" viewBox="0 0 32 17"><ellipse cx="20" cy="8" rx="11" ry="7" fill="#eac3a0" /><path d="M3 12c4-8 8-2 13-6s9-4 8 0-7 6-12 6-6 3-9 0z" fill="#5ea02f" /><circle cx="5" cy="12" r="4.500" fill="#7fae6a" /><circle cx="27" cy="12" r="4.500" fill="#57925a" /><path d="M7 16l20-5" stroke="#9a5a34" strokeWidth="2" /><circle cx="18" cy="5" r="2.500" fill="#8ac440" /></svg>
      </div>
      <div className="ml-[2px] flex">
        {taskIcons.map((icon, i) => (
          <span key={i} className={`relative w-[29.3px] h-[24px] flex items-center justify-center ${i === 10 ? 'bg-[#2d3c42] rounded-[3px]' : ''}`}>
            {icon}
            {i > 2 && <i className={`absolute bottom-0 h-[1.5px] rounded-full ${i === 10 ? 'w-[10px] bg-[#5cc4ee]' : 'w-[4px] bg-[#a6afb2]'}`} />}
          </span>
        ))}
      </div>
      <div className="flex-1" />
      <ChevronUp className="size-[9px]" strokeWidth={2.500} />
      <Tile className="ml-[12px] size-[10px]! bg-white text-[#c8202f]! text-[9px]">V</Tile>
      <RefreshCw className="ml-[11px] size-[11px] text-[#cde]" />
      <Mic className="ml-[11px] size-[11px] text-[#9fd6cc]" />
      <span className="ml-[11px] w-[17px]">ENG</span>
      <MonitorSmartphone className="ml-[11px] size-[11px]" />
      <Volume2 className="ml-[5px] size-[11px]" />
      <div className="ml-[11px] mr-[9px] w-[43px] flex flex-col gap-[3px] items-end"><span>5:06 CH</span><span>08/01/2026</span></div>
    </div>
  );
}

function StatusBar() {
  return (
    <div className="h-[16px] shrink-0 bg-[#f3f4f4] border-t border-[#d5dddf] flex items-center text-[7.4px] leading-none text-[#444] whitespace-nowrap">
      <span className="ml-[4px] w-[54px]">Slide 2 of 14</span>
      <BookOpen className="size-[10px]" />
      <span className="ml-[11px] w-[50px]">Vietnamese</span>
      <PersonStanding className="size-[10px]" />
      <b className="ml-[3px] tracking-[-0.27px]">Accessibility: Investigate</b>
      <div className="flex-1" />
      <svg width="11" height="9" viewBox="0 0 11 9" fill="none" stroke="#444"><path d="M.5 4.500h10M.5 7.500h10M3 3l2.500-2.500L8 3" /></svg>
      <span className="ml-[1px] w-[32px]">Notes</span>
      <span className="w-[26px] h-full bg-[#dedede] flex items-center justify-center"><svg width="11" height="9" viewBox="0 0 11 9" fill="none" stroke="#333"><path d="M.5.5h10v8H.5zM3 .5v8M5 3h4v3H5z" /></svg></span>
      <LayoutGrid className="ml-[9px] size-[10px]" />
      <BookOpen className="ml-[17px] size-[10px]" />
      <Presentation className="ml-[16px] size-[10px]" />
      <Minus className="ml-[12px] size-[7px]" />
      <span className="ml-[3px] w-[66px] h-[8px] flex items-center"><i className="w-[33px] h-px bg-[#888]" /><i className="w-[3px] h-[8px] bg-[#555]" /><i className="flex-1 h-px bg-[#888]" /></span>
      <span className="ml-[3px] text-[9px]">+</span>
      <span className="ml-[8px] w-[28px]">111%</span>
      <svg className="mr-0" width="10" height="10" viewBox="0 0 10 10" fill="none" stroke="#444"><path d="M3 3h4v4H3zM4 1.500L5 .5l1 1M4 8.500l1 1 1-1M1.500 4l-1 1 1 1M8.500 4l1 1-1 1" /></svg>
    </div>
  );
}

export default function App() {
  return (
    <div className={`relative w-[1280px] h-[720px] overflow-hidden flex flex-col bg-[#e7eeef] border-l-4 border-t-[3px] border-r-[3px] border-b-4 border-[#8fce33] ${ui}`}>
      <TitleBar />
      <TabRow />
      <Ribbon />
      <div className="h-[552px] shrink-0 mt-px flex bg-[#e6edef]">
        <Thumbnails />
        <div className="w-[13px] shrink-0 bg-[#f3f5f5] border-r border-[#cfd6d8] flex flex-col items-center py-[2px]">
          <svg width="7" height="6" viewBox="0 0 7 6" fill="#666"><path d="M3.500 0L7 6H0z" /></svg>
          <div className="mt-[2px] w-[6px] h-[182px] rounded-full bg-[#757575]" />
          <div className="flex-1" />
          <svg width="7" height="6" viewBox="0 0 7 6" fill="#666"><path d="M0 0h7L3.500 6z" /></svg>
        </div>
        <div className="flex-1 pl-[51px] pt-[9px]">
          <div className="relative w-[941px] shadow-[0_0_1px_1px_#cfd6d8]">
            <MainSlide />
            <Selection />
          </div>
        </div>
        <div className="w-[8px] shrink-0 bg-[#f3f5f5] flex flex-col items-center pl-[1px] pt-[45px] pb-[16px]">
          <div className="w-[5px] h-[35px] rounded-full bg-[#6a6a6a]" />
          <div className="flex-1" />
          <svg width="6" height="28" viewBox="0 0 6 28" fill="#555"><path d="M0 0h6L3 4.500zM3 9l3 4H0zM1 13h4v3H1zM1 20h4v3H1zM0 23h6l-3 4.500z" /></svg>
        </div>
      </div>
      <StatusBar />
      <Taskbar />

      {/* meeting controls float over the shared window */}
      <div className="absolute -top-[3px] left-[315px] w-[668px] h-[43px] bg-[#0c0c0c] rounded-b-[5px] flex whitespace-nowrap">
        <ZoomItem w="w-[60px]" icon={<Mic className="size-[17px]" strokeWidth={1.600} />} label="Audio" chev="left-[45px]" />
        <ZoomItem w="w-[52px]" icon={<Video className="size-[18px]" strokeWidth={1.600} />} label="Video" chev="left-[41px]" />
        <ZoomItem w="w-[86px]" icon={<Users className="size-[15px]" strokeWidth={1.800} />} label="Participants" chev="left-[71px]" count="20" />
        <ZoomItem w="w-[60px]" icon={<MessageCircleMore className="size-[15px]" strokeWidth={1.800} />} label="Chat" chev="left-[48px]" />
        <ZoomItem w="w-[59px]" icon={<span className="w-[16px] h-[14px] rounded-[2px] bg-[#1fe07a] flex items-center justify-center"><ArrowUp className="size-[11px] text-black" strokeWidth={3} /></span>} label="Share" />
        <ZoomItem w="w-[54px]" icon={<span className="flex gap-[3px]"><i className="w-[3px] h-[12px] bg-white" /><i className="w-[3px] h-[12px] bg-white" /></span>} label="Pause" />
        <ZoomItem w="w-[57px]" icon={<svg width="18" height="14" viewBox="0 0 18 14" fill="none" stroke="#fff" strokeWidth="1.200"><rect x=".6" y=".6" width="16.800" height="12.800" rx="2" /><circle cx="5.500" cy="5" r="1.800" fill="#fff" /><path d="M2.500 11c0-4 6-4 6 0z" fill="#fff" /></svg>} label="Layout" />
        <ZoomItem w="w-[55px]" icon={<PencilLine className="size-[16px]" strokeWidth={1.800} />} label="Annotate" />
        <ZoomItem w="w-[66px]" icon={<Mouse className="size-[17px]" strokeWidth={1.600} />} label="Remote control" />
        <ZoomItem w="w-[60px]" icon={<svg width="17" height="14" viewBox="0 0 17 14"><rect width="15" height="10" rx="2" fill="#fff" /><rect x="7" y="5" width="9" height="7.500" rx="1.500" fill="#0c0c0c" stroke="#fff" strokeWidth="1.200" /></svg>} label="Show meeting" />
        <ZoomItem w="w-[58px]" icon={<CircleEllipsis className="size-[18px]" strokeWidth={1.600} />} label="More" />
        <span className="absolute left-[230px] top-[4px] size-[11px] rounded-full bg-[#dc2f45] text-white text-[7.5px] leading-none flex items-center justify-center">2</span>
      </div>
      <div className="absolute top-[40px] left-[529px] w-[240px] h-[15px] rounded-b-[4px] overflow-hidden flex text-[7.600px] leading-none whitespace-nowrap">
        <div className="w-[176px] bg-[#2eec53] text-[#0c6420] flex items-center">
          <svg className="ml-[8px]" width="7" height="8" viewBox="0 0 7 8" fill="#0c6420"><path d="M6 0C1 1 0 4 2 8 2 5 3 4 7 3z" /></svg>
          <span className="ml-[22px] w-[108px] font-semibold">You are screen sharing</span>
          <CloudUpload className="size-[10px]" /><ShieldCheck className="ml-[5px] size-[9px] fill-[#0c6420] stroke-[#2eec53]" />
        </div>
        <div className="flex-1 bg-[#c8102b] text-white flex items-center"><i className="ml-[5px] mb-[2px] size-[6px] bg-white" /><span className="ml-[4px] font-semibold">Stop share</span></div>
      </div>
      <div className="absolute top-[89px] left-[1109px] w-[152px] h-[23px] rounded-[2px] bg-[#0d1015] text-[#e4e4e4] text-[8.300px] leading-none flex items-center pl-[17px]">Talking: admin</div>
      <div className="absolute left-[6px] top-[644px] size-[22px] rounded-full bg-[#1b2322] flex items-center justify-center"><PencilLine className="size-[12px] text-[#35d68a]" /></div>
      <svg className="absolute left-[105px] top-[389px]" width="36" height="36" viewBox="0 0 36 36">
        <circle cx="18" cy="18" r="15" fill="#ffe712" stroke="#c03a14" strokeWidth="2.500" />
        <circle cx="18" cy="18" r="13" fill="none" stroke="#f0a012" strokeWidth="1.500" />
        <circle cx="18" cy="18" r="6" fill="#fff9b0" />
        <path d="M18 18v11l2.700-2.500 1.800 4 2-1-1.800-3.800h3.600z" fill="#fff" stroke="#555" strokeWidth=".9" />
      </svg>
    </div>
  );
}
